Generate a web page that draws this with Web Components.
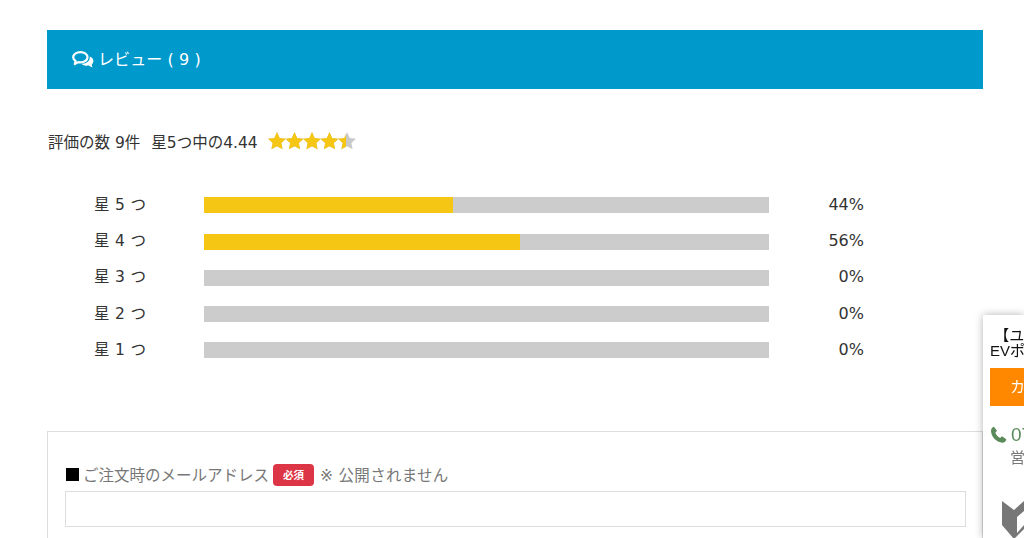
<!DOCTYPE html>
<html lang="ja">
<head>
<meta charset="utf-8">
<title>レビュー</title>
<style>
  html, body { margin: 0; height: 100%; overflow: hidden; background: #fff; }
  body { font-family: "DejaVu Sans", "Noto Sans CJK JP", sans-serif; color: #333; }
</style>
</head>
<body>
<review-page>
  <review-header count="9"></review-header>
  <review-summary total="9" score="4.44"></review-summary>
  <rating-bars>
    <rating-row stars="5" percent="44"></rating-row>
    <rating-row stars="4" percent="56"></rating-row>
    <rating-row stars="3" percent="0"></rating-row>
    <rating-row stars="2" percent="0"></rating-row>
    <rating-row stars="1" percent="0"></rating-row>
  </rating-bars>
  <review-form></review-form>
</review-page>
<side-widget></side-widget>

<script>
class ReviewPage extends HTMLElement {
  constructor() {
    super();
    this.attachShadow({ mode: "open" });
    this.shadowRoot.innerHTML = `
      <style>
        :host { display: block; padding: 30px 41px 0 47px; }
      </style>
      <slot></slot>
    `;
  }
}
customElements.define("review-page", ReviewPage);

class ReviewHeader extends HTMLElement {
  constructor() {
    super();
    this.attachShadow({ mode: "open" });
    this.shadowRoot.innerHTML = `
      <style>
        :host { display: flex; align-items: center; gap: 3px; height: 59px; padding-left: 24px; background: #0099cc; color: #fff; font-size: 16px; }
        svg { width: 24px; height: 20px; display: block; margin-top: 1px; }
        .t { white-space: pre; margin-top: -3px; letter-spacing: 0.1px; }
      </style>
      <svg viewBox="0 0 24 20">
        <path fill="none" stroke="#fff" stroke-width="2.200" stroke-linejoin="round" d="M9.500 2.200c4 0 7 2.300 7 5.100s-3 5.100-7 5.100c-.9 0-1.600-.1-2.300-.3L3.800 14l.8-3.100C3 10 2.200 8.700 2.200 7.300c0-2.800 3.200-5.100 7.300-5.100z"/>
        <path fill="#fff" d="M18.700 6.500c2.200.9 3.700 2.600 3.700 4.500 0 1.300-.6 2.500-1.700 3.400l.7 3.100-3.800-1.900c-2.700.5-5.400-.2-7-1.900 4.500.3 8.800-2.800 8.100-7.200z"/>
      </svg>
      <span class="t">レビュー ( ${this.getAttribute("count")} )</span>
    `;
  }
}
customElements.define("review-header", ReviewHeader);

class StarRating extends HTMLElement {
  constructor() {
    super();
    this.attachShadow({ mode: "open" });
    const value = Number(this.getAttribute("value"));
    const star = "M9 0l2.700 5.900 6.300.8-4.600 4.300 1.200 6.200L9 14.200l-5.600 3 1.200-6.200L0 6.700l6.300-.8z";
    let stars = "";
    for (let i = 0; i < 5; i++) {
      const w = Math.max(0, Math.min(1, value - i)) * 18;
      stars += `<g transform="translate(${i * 17.5} 0)">
        <path d="${star}" fill="#c9c9c9"/>
        <clipPath id="c${i}"><rect width="${w}" height="18"/></clipPath>
        <path d="${star}" fill="#f6c614" clip-path="url(#c${i})"/>
      </g>`;
    }
    this.shadowRoot.innerHTML = `<style>
        :host { display: block; width: 89px; height: 18px; margin-left: -1px; white-space: normal; }
        svg { display: block; }
      </style><svg width="89" height="18" viewBox="0 0 89 18">${stars}</svg>`;
  }
}
customElements.define("star-rating", StarRating);

class ReviewSummary extends HTMLElement {
  constructor() {
    super();
    this.attachShadow({ mode: "open" });
    const score = this.getAttribute("score");
    this.shadowRoot.innerHTML = `
      <style>
        :host { display: flex; align-items: center; gap: 11px; margin-top: 43px; height: 18px; font-size: 15.500px; color: #333; padding-left: 1px; }
        span { white-space: pre; margin-top: -1px; }
      </style>
      <span>評価の数 ${this.getAttribute("total")}件</span>
      <span>星5つ中の${score}</span>
      <star-rating value="${score}"></star-rating>
    `;
  }
}
customElements.define("review-summary", ReviewSummary);

class RatingBars extends HTMLElement {
  constructor() {
    super();
    this.attachShadow({ mode: "open" });
    this.shadowRoot.innerHTML = `
      <style>
        :host { display: grid; row-gap: 20.250px; margin-top: 47.400px; padding-left: 47px; }
      </style>
      <slot></slot>
    `;
  }
}
customElements.define("rating-bars", RatingBars);

class RatingRow extends HTMLElement {
  constructor() {
    super();
    this.attachShadow({ mode: "open" });
    const percent = this.getAttribute("percent");
    this.shadowRoot.innerHTML = `
      <style>
        :host { display: grid; grid-template-columns: 110px 565px 95px; align-items: center; height: 16px; font-size: 15.500px; line-height: 16px; color: #333; }
        span { white-space: pre; margin-top: -1px; letter-spacing: 0.3px; }
        .bar { height: 16px; background: #cccccc; }
        .fill { height: 100%; background: #f6c614; width: ${percent}%; }
        .pct { text-align: right; margin-top: -1px; font-size: 16px; letter-spacing: 0; }
      </style>
      <span>星 ${this.getAttribute("stars")} つ</span>
      <div class="bar"><div class="fill"></div></div>
      <span class="pct">${percent}%</span>
    `;
  }
}
customElements.define("rating-row", RatingRow);

class ReviewForm extends HTMLElement {
  constructor() {
    super();
    this.attachShadow({ mode: "open" });
    this.shadowRoot.innerHTML = `
      <style>
        :host { display: block; margin-top: 72.400px; height: 200px; box-sizing: border-box; border: 1px solid #dddddd; padding: 30px 16px 0 17px; font-size: 15.500px; color: #777; }
        .label { display: flex; align-items: center; height: 26px; margin-bottom: 3px; }
        .label span { white-space: pre; margin-top: -2px; }
        .sq { width: 13px; height: 13px; margin: 0 4px 0 1px; background: #000; }
        .label .badge { margin: 0 6px 0 4px; width: 41px; height: 22px; line-height: 22px; text-align: center; border-radius: 4px; background: #dc3545; color: #fff; font-size: 10.500px; font-weight: 700; }
        .label .tail { letter-spacing: 0.3px; }
        .input { height: 34px; border: 1px solid #dddddd; }
      </style>
      <div class="label"><div class="sq"></div><span>ご注文時のメールアドレス</span><span class="badge">必須</span><span class="tail">※ 公開されません</span></div>
      <div class="input"></div>
    `;
  }
}
customElements.define("review-form", ReviewForm);

class SideWidget extends HTMLElement {
  constructor() {
    super();
    this.attachShadow({ mode: "open" });
    this.shadowRoot.innerHTML = `
      <style>
        :host { position: fixed; left: 983px; top: 315px; width: 41px; height: 223px; overflow: hidden; background: #fff; box-shadow: 0 0 8px rgba(0,0,0,.3); padding: 13px 0 0 7px; box-sizing: border-box; font-family: "Liberation Sans", "Noto Sans CJK JP", sans-serif; font-size: 15px; color: #111; }
        .title { line-height: 15px; height: 31px; white-space: pre; }
        .btn { margin-top: 9px; height: 38px; line-height: 38px; background: #ff8800; color: #fff; padding-left: 20px; white-space: nowrap; }
        .tel { display: flex; align-items: center; gap: 3px; margin-top: 17px; height: 24px; color: #5b8a5b; font-size: 19px; white-space: nowrap; }
        .tel svg { display: block; flex: none; width: 18px; height: 18px; }
        .hours { margin: -1px 0 0 20px; font-size: 15px; color: #777; white-space: nowrap; }
        .mark { display: block; margin: 31px 0 0 12px; }
      </style>
      <div class="title"> 【ユ
EVポ</div>
      <div class="btn">カ</div>
      <div class="tel">
        <svg viewBox="0 0 18 18"><path fill="#5b8a5b" d="M4 .8l3 4-1.700 2c.8 2.100 2.600 4 4.800 5.100l1.900-1.600 4.300 2.900c-.3 2.200-1.900 3.500-3.800 3.500C6.300 16.700 1 10.400 1 4.800 1 2.900 2.200 1.300 4 .8z"/></svg>
        <span>07</span>
      </div>
      <div class="hours">営</div>
      <svg class="mark" width="22" height="42" viewBox="0 0 22 42"><path fill="#777" d="M0 3l12 9 10-9v28L12 41 0 27z"/><path fill="#fff" d="M15 19l7-6v14l-7 8z"/></svg>
    `;
  }
}
customElements.define("side-widget", SideWidget);
</script>
</body>
</html>
